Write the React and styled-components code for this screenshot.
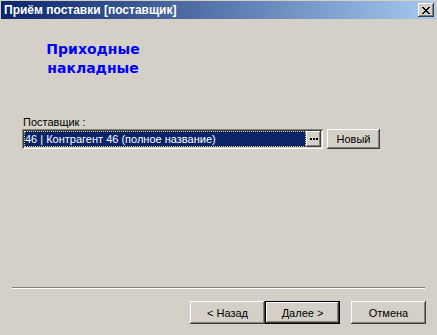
import styled, { createGlobalStyle } from "styled-components";

const GlobalStyle = createGlobalStyle`
  html, body {
    margin: 0;
    padding: 0;
    background: #d4d0c8;
  }
  body {
    font-family: "Liberation Sans", Arial, sans-serif;
    font-size: 11px;
    color: #000;
  }
`;

const Window = styled.div`
  width: 437px;
  height: 335px;
  box-sizing: border-box;
  display: flex;
  flex-direction: column;
  background: #d4d0c8;
  overflow: hidden;
`;

const TitleBar = styled.div`
  height: 18px;
  margin: 1px 1px 0;
  padding: 0 2px 0 3px;
  display: flex;
  align-items: center;
  justify-content: space-between;
  background: linear-gradient(to right, #0a246a, #a6caf0);
`;

const TitleText = styled.span`
  color: #fff;
  font-weight: bold;
  font-size: 12px;
  white-space: nowrap;
`;

const CloseButton = styled.button`
  width: 16px;
  height: 14px;
  padding: 0;
  display: flex;
  align-items: center;
  justify-content: center;
  background: #d4d0c8;
  border: none;
  box-shadow: inset -1px -1px #404040, inset 1px 1px #fff,
    inset -2px -2px #808080, inset 2px 2px #d4d0c8;
`;

const Body = styled.div`
  flex: 1;
  display: flex;
  flex-direction: column;
  padding: 21px 0 0 22px;
`;

const Heading = styled.div`
  width: 142px;
  color: #0000ff;
  font-family: "DejaVu Sans", sans-serif;
  font-weight: bold;
  font-size: 14px;
  line-height: 19px;
  text-align: center;
`;

const FieldLabel = styled.div`
  margin: 38px 0 0 1px;
  line-height: 13px;
`;

const FieldRow = styled.div`
  display: flex;
  align-items: flex-start;
  gap: 4px;
`;

const Combo = styled.div`
  width: 301px;
  height: 20px;
  box-sizing: border-box;
  padding: 2px;
  display: flex;
  background: #fff;
  box-shadow: inset 1px 1px #808080, inset -1px -1px #fff,
    inset 2px 2px #404040, inset -2px -2px #d4d0c8;
`;

const ComboValue = styled.div`
  flex: 1;
  background: #0a246a;
  color: #fff;
  padding: 0 1px;
  line-height: 14px;
  white-space: nowrap;
  overflow: hidden;
  outline: 1px dotted #e8d878;
  outline-offset: -1px;
  display: flex;
  align-items: center;
`;

const DotsButton = styled.button`
  width: 15px;
  height: 16px;
  padding: 0;
  display: flex;
  align-items: center;
  justify-content: center;
  background: #d4d0c8;
  border: none;
  box-shadow: inset -1px -1px #404040, inset 1px 1px #fff,
    inset -2px -2px #808080;
`;

const Button = styled.button`
  width: ${(p) => p.$width || 75}px;
  height: ${(p) => p.$height || 23}px;
  padding: 0;
  margin-left: ${(p) => p.$gap || 0}px;
  font-family: "Liberation Sans", Arial, sans-serif;
  font-size: 11px;
  color: #000;
  background: #d4d0c8;
  border: ${(p) => (p.$default ? "1px solid #000" : "none")};
  box-sizing: border-box;
  box-shadow: inset -1px -1px #404040, inset 1px 1px #fff,
    inset -2px -2px #808080;
`;

const Footer = styled.div`
  padding: 0 11px 11px 12px;
`;

const Separator = styled.div`
  height: 0;
  margin-right: 1px;
  border-top: 1px solid #808080;
  border-bottom: 1px solid #fff;
`;

const ButtonRow = styled.div`
  display: flex;
  justify-content: flex-end;
  margin-top: 12px;
`;

function CloseIcon() {
  return (
    <svg width="8" height="7" viewBox="0 0 8 7">
      <path
        d="M0 0h2v1h1v1h2v-1h1v-1h2v1h-1v1h-1v1h-1v1h1v1h1v1h1v1h-2v-1h-1v-1h-2v1h-1v1h-2v-1h1v-1h1v-1h1v-1h-1v-1h-1v-1h-1z"
        fill="#000"
      />
    </svg>
  );
}

function DotsIcon() {
  return (
    <svg width="8" height="2" viewBox="0 0 8 2">
      <rect x="0" y="0" width="2" height="2" fill="#000" />
      <rect x="3" y="0" width="2" height="2" fill="#000" />
      <rect x="6" y="0" width="2" height="2" fill="#000" />
    </svg>
  );
}

function App() {
  return (
    <>
      <GlobalStyle />
      <Window>
        <TitleBar>
          <TitleText>Приём поставки [поставщик]</TitleText>
          <CloseButton>
            <CloseIcon />
          </CloseButton>
        </TitleBar>

        <Body>
          <Heading>
            Приходные
            <br />
            накладные
          </Heading>
          <FieldLabel>Поставщик :</FieldLabel>
          <FieldRow>
            <Combo>
              <ComboValue>46 | Контрагент 46 (полное название)</ComboValue>
              <DotsButton>
                <DotsIcon />
              </DotsButton>
            </Combo>
            <Button $width={53} $height={20}>
              Новый
            </Button>
          </FieldRow>
        </Body>

        <Footer>
          <Separator />
          <ButtonRow>
            <Button>&lt; Назад</Button>
            <Button $default>Далее &gt;</Button>
            <Button $gap={11}>Отмена</Button>
          </ButtonRow>
        </Footer>
      </Window>
    </>
  );
}

export default App;
